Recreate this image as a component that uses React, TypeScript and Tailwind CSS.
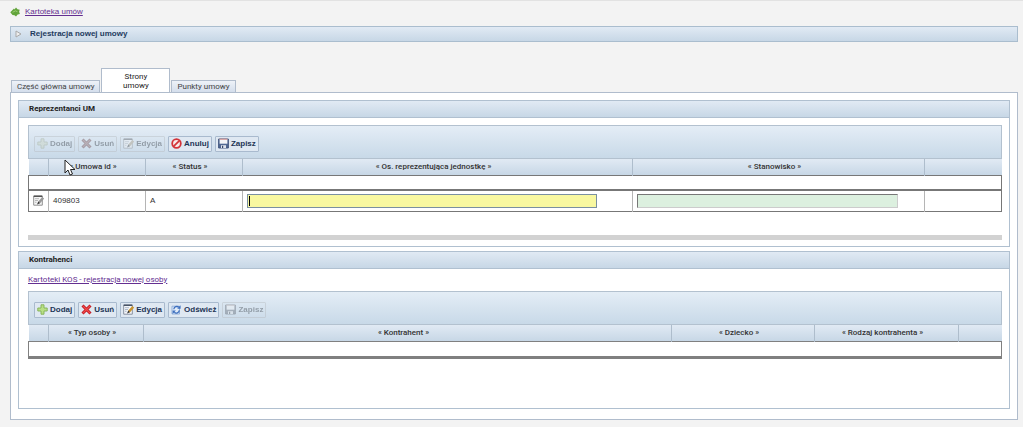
import type { ReactNode } from 'react';

const SANS = "font-['Liberation_Sans',Arial,sans-serif]";
const NARROW = "font-['Roboto',sans-serif]";
const BAR = 'bg-linear-to-b from-[#e1eaf4] to-[#c7d7e6]';

type IconName = 'add' | 'remove' | 'edit' | 'cancel' | 'save' | 'refresh';

const Icon = ({ name }: { name: IconName }) => {
  const shapes: Record<IconName, ReactNode> = {
    add: (
      <path d="M4 .8h3V4h3.200v3H7v3.200H4V7H.8V4H4z" fill="#b9df86" stroke="#82b152" strokeWidth=".9" />
    ),
    remove: (
      <>
        <path d="M1.500 1.500l8 8M9.500 1.500l-8 8" stroke="#c01822" strokeWidth="3" />
        <path d="M2 2l7 7M9 2L2 9" stroke="#f04a4a" strokeWidth="1.200" />
      </>
    ),
    edit: (
      <>
        <path d="M.7 1.200h8.600v9H.7z" fill="#f4f6fa" stroke="#7d8796" strokeWidth=".9" />
        <path d="M.7 1.200h8.600" stroke="#3e4a5e" strokeWidth="1.400" />
        <path d="M2 3.700h4M2 5.500h3M2 7.300h1.500" stroke="#9aa9bf" strokeWidth=".8" />
        <path d="M10.200 2.800L6 7.600" stroke="#c9952f" strokeWidth="2.400" />
        <path d="M5.300 6.400L4 9.600l3-1.300z" fill="#333" />
      </>
    ),
    cancel: (
      <>
        <circle cx="5.500" cy="5.500" r="4.300" fill="#f8ecec" stroke="#d3343a" strokeWidth="1.800" />
        <path d="M8.400 2.600L2.600 8.400" stroke="#d3343a" strokeWidth="1.700" />
      </>
    ),
    save: (
      <>
        <path d="M.6 1h9.800v9H.6z" fill="#526a94" stroke="#3c5079" strokeWidth=".9" />
        <path d="M1.600 1h7.800v4.700H1.600z" fill="#f3f5f8" />
        <path d="M1.600 1.200h7.800" stroke="#c77878" strokeWidth=".9" />
        <path d="M3 7.200h5V10H3z" fill="#dfe4ec" />
        <path d="M4 7.800h1.200V10H4z" fill="#34466b" />
      </>
    ),
    refresh: (
      <>
        <path d="M1 2.200h7.500V10H1z" fill="#e3edf9" stroke="#8ba9d6" strokeWidth=".9" />
        <path d="M2.800 5.200a3 3 0 0 1 5-1.900M8.300 6.400a3 3 0 0 1-5 1.900" fill="none" stroke="#3d6fbe" strokeWidth="1.300" />
        <path d="M9.600 1.200v3.500H6.200zM1.600 10V6.600h3.300z" fill="#3d6fbe" />
      </>
    ),
  };
  return (
    <svg viewBox="0 0 11 11" className="h-[11px] w-[11px] shrink-0" aria-hidden="true">
      {shapes[name]}
    </svg>
  );
};

const ToolButton = ({ icon, label, disabled }: { icon: IconName; label: string; disabled?: boolean }) => (
  <button
    type="button"
    disabled={disabled}
    className={`flex h-4 items-center gap-0.5 rounded-[1px] border px-0.5 text-[8px] font-bold text-[#1d3556] ${
      disabled ? 'border-[#a9b8c9] opacity-40 grayscale-75' : 'border-[#a9bace] bg-[#dfe8f2]'
    } ${SANS}`}
  >
    <Icon name={icon} />
    {label}
  </button>
);

const Section = ({ title, className, children }: { title: string; className: string; children: ReactNode }) => (
  <section className={`border border-[#b0c0d0] bg-white ${className}`}>
    <h2 className={`flex h-[17px] items-center border-b border-[#b0c0d0] px-[10px] text-[8px] font-bold text-[#222] ${BAR} ${NARROW}`}>
      {title}
    </h2>
    <div className="pr-[7px] pl-[9px]">{children}</div>
  </section>
);

const Toolbar = ({ children }: { children: ReactNode }) => (
  <div className="flex h-[34px] items-center gap-[3px] border border-[#b3c1cf] bg-linear-to-b from-[#e4edf6] to-[#c8d9e8] px-[5px] pt-[3px]">
    {children}
  </div>
);

const TableHead = ({ labels }: { labels: string[] }) => (
  <thead>
    <tr className={`h-4 ${BAR}`}>
      {labels.map((label, i) => (
        <th
          key={i}
          className={`border-r border-[#aebdcc] p-0 pr-2 text-center text-[8px] font-medium text-[#333] last:border-r-0 ${NARROW}`}
        >
          {label && `« ${label} »`}
        </th>
      ))}
    </tr>
  </thead>
);

const Cell = ({ children }: { children?: ReactNode }) => (
  <td className="border-r border-[#b5b5b5] p-0 pl-1 last:border-r-0">{children}</td>
);

const Tab = ({ label, active }: { label: string; active?: boolean }) => (
  <button
    type="button"
    role="tab"
    aria-selected={!!active}
    className={`border border-b-0 border-[#b0bccc] text-center text-[8px] ${NARROW} ${
      active
        ? 'h-6 w-[69px] bg-white px-4 leading-[9px] text-[#222]'
        : 'h-3 bg-linear-to-b from-[#eef2f8] to-[#d4deec] px-[5px] leading-[11px] text-[#444]'
    }`}
  >
    {label}
  </button>
);

export default function App() {
  return (
    <div className={`relative min-h-screen border-t border-[#e2e2e2] bg-[#f3f3f3] pr-[5px] pb-2 pl-[10px] text-[8px] leading-[10px] text-[#333] ${SANS}`}>
      <nav className="flex h-[25px] items-center gap-[5px] pb-1">
        <svg viewBox="0 0 10 10" className="h-[10px] w-[10px]" aria-hidden="true">
          <path d="M.3 5.200L4 1.500l.5 1L6 .5l1.500 1.700 2.200.5-.6 2 .8 2.300-2.200.5L6 9.600 4.500 8.200 2.500 8z" fill="#62a43a" />
          <path d="M2.500 5.300l3-1.500 2 1" stroke="#9ccc74" fill="none" />
        </svg>
        <a href="#kartoteka" className="text-[#642f91] underline">Kartoteka umów</a>
      </nav>

      <h1 className={`flex h-4 items-center gap-2 border border-[#aabdce] px-1 text-[8px] font-bold text-[#1f3c5f] ${BAR}`}>
        <svg viewBox="0 0 7 8" className="h-2 w-[7px]" aria-hidden="true">
          <path d="M1 1l5 3-5 3z" fill="#eee" stroke="#a9a9a9" />
        </svg>
        Rejestracja nowej umowy
      </h1>

      <div role="tablist" className="flex h-[50px] items-end gap-px pl-px">
        <Tab label="Część główna umowy" />
        <Tab label="Strony umowy" active />
        <Tab label="Punkty umowy" />
      </div>

      <main className="border border-[#b0bccc] bg-white px-[7px] pt-[7px] pb-[10px]">
        <Section title="Reprezentanci UM" className="h-[147px]">
          <div className="pt-[7px]">
            <Toolbar>
              <ToolButton icon="add" label="Dodaj" disabled />
              <ToolButton icon="remove" label="Usuń" disabled />
              <ToolButton icon="edit" label="Edycja" disabled />
              <ToolButton icon="cancel" label="Anuluj" />
              <ToolButton icon="save" label="Zapisz" />
            </Toolbar>
            <table className="w-full table-fixed border-collapse">
              <colgroup>
                <col className="w-[20px]" />
                <col className="w-[97px]" />
                <col className="w-[97px]" />
                <col />
                <col className="w-[292px]" />
                <col className="w-[77px]" />
              </colgroup>
              <TableHead labels={['', 'Umowa id', 'Status', 'Os. reprezentująca jednostkę', 'Stanowisko', '']} />
              <tbody>
                <tr className="h-[15px] border border-b-2 border-[#777]">
                  <td colSpan={6} className="p-0" />
                </tr>
                <tr className="h-[21px] border border-[#777]">
                  <Cell>
                    <button type="button" aria-label="Edytuj" className="block grayscale">
                      <Icon name="edit" />
                    </button>
                  </Cell>
                  <Cell>409803</Cell>
                  <Cell>A</Cell>
                  <Cell>
                    <div className="relative w-[91%]">
                      <input
                        aria-label="Os. reprezentująca jednostkę"
                        className="block h-[14px] w-full border border-[#7a90a0] bg-[#f8f8a0] px-0.5 text-[8px] outline-none"
                      />
                      <span className="pointer-events-none absolute top-0.5 left-0.5 h-[10px] w-px bg-black" />
                    </div>
                  </Cell>
                  <Cell>
                    <input
                      aria-label="Stanowisko"
                      className="block h-[14px] w-[91%] border border-t-[#777] border-r-[#ccc] border-b-[#ccc] border-l-[#777] bg-[#dcf0df] px-0.5 text-[8px] outline-none"
                    />
                  </Cell>
                  <Cell />
                </tr>
              </tbody>
            </table>
            <div className="mt-[23px] h-[5px] bg-[#d2d2d2]" />
          </div>
        </Section>

        <Section title="Kontrahenci" className="mt-1 h-[158px]">
          <div className="flex h-[22px] items-center">
            <a href="#kos" className={`text-[#642f91] underline ${NARROW}`}>Kartoteki KOS - rejestracja nowej osoby</a>
          </div>
          <Toolbar>
            <ToolButton icon="add" label="Dodaj" />
            <ToolButton icon="remove" label="Usuń" />
            <ToolButton icon="edit" label="Edycja" />
            <ToolButton icon="refresh" label="Odśwież" />
            <ToolButton icon="save" label="Zapisz" disabled />
          </Toolbar>
          <table className="w-full table-fixed border-collapse">
            <colgroup>
              <col className="w-[20px]" />
              <col className="w-[95px]" />
              <col />
              <col className="w-[143px]" />
              <col className="w-[144px]" />
              <col className="w-[43px]" />
            </colgroup>
            <TableHead labels={['', 'Typ osoby', 'Kontrahent', 'Dziecko', 'Rodzaj kontrahenta', '']} />
            <tbody>
              <tr className="h-4 border border-b-3 border-[#808080]">
                <td colSpan={6} className="p-0" />
              </tr>
            </tbody>
          </table>
        </Section>
      </main>

      <svg viewBox="0 0 12 17" className="pointer-events-none absolute top-[158px] left-[64px] h-[17px] w-3" aria-hidden="true">
        <path d="M1 1v13l3-3 2 5 2.500-1-2-4.500H11z" fill="#fff" stroke="#222" />
      </svg>
    </div>
  );
}
